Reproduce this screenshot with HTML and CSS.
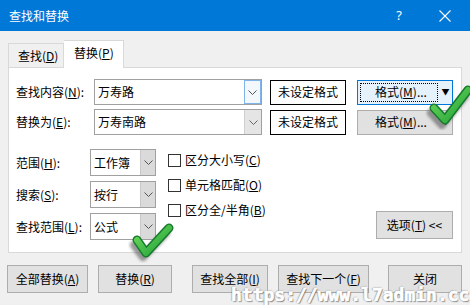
FILE: index.html
```html
<!DOCTYPE html>
<html lang="zh">
<head>
<meta charset="utf-8">
<link rel="stylesheet" href="styles.css">
</head>
<body>
<div class="titlebar">
  <span class="title">查找和替换</span>
  <span class="help">?</span>
  <svg class="close" width="12" height="12" viewBox="0 0 12 12"><path d="M0.5 0.5 L11.5 11.5 M11.5 0.5 L0.5 11.5" stroke="#fff" stroke-width="1.1" fill="none"/></svg>
</div>
<div class="tabs">
  <div class="tab">查找(<u>D</u>)</div>
  <div class="tab active">替换(<u>P</u>)</div>
</div>
<div class="panel">
  <div class="row">
    <span class="lbl">查找内容(<u>N</u>):</span>
    <div class="combo"><span class="val">万寿路</span><span class="arrow hot"><svg width="9" height="5" viewBox="0 0 9 5"><path d="M0.5 0.5 L4.5 4.5 L8.5 0.5" stroke="#555" fill="none"/></svg></span></div>
    <div class="fmtbox">未设定格式</div>
    <div class="fmtbtn focus"><span class="main"><span class="dots">格式(<u>M</u>)...</span></span><span class="drop">▼</span></div>
  </div>
  <div class="row r2">
    <span class="lbl">替换为(<u>E</u>):</span>
    <div class="combo"><span class="val">万寿南路</span><span class="arrow"><svg width="9" height="5" viewBox="0 0 9 5"><path d="M0.5 0.5 L4.5 4.5 L8.5 0.5" stroke="#666" fill="none"/></svg></span></div>
    <div class="fmtbox">未设定格式</div>
    <div class="fmtbtn"><span class="main"><span class="dots nofocus">格式(<u>M</u>)...</span></span><span class="drop">▼</span></div>
  </div>
  <div class="opts">
    <div class="selcol">
      <div class="srow"><span class="slbl">范围(<u>H</u>):</span><div class="sel"><span class="val">工作簿</span><span class="sarrow"><svg width="9" height="5" viewBox="0 0 9 5"><path d="M0.5 0.5 L4.5 4.5 L8.5 0.5" stroke="#555" fill="none"/></svg></span></div></div>
      <div class="srow"><span class="slbl">搜索(<u>S</u>):</span><div class="sel"><span class="val">按行</span><span class="sarrow"><svg width="9" height="5" viewBox="0 0 9 5"><path d="M0.5 0.5 L4.5 4.5 L8.5 0.5" stroke="#555" fill="none"/></svg></span></div></div>
      <div class="srow"><span class="slbl">查找范围(<u>L</u>):</span><div class="sel"><span class="val">公式</span><span class="sarrow"><svg width="9" height="5" viewBox="0 0 9 5"><path d="M0.5 0.5 L4.5 4.5 L8.5 0.5" stroke="#555" fill="none"/></svg></span></div></div>
    </div>
    <div class="checks">
      <label class="chk"><span class="box"></span>区分大小写(<u>C</u>)</label>
      <label class="chk"><span class="box"></span>单元格匹配(<u>O</u>)</label>
      <label class="chk"><span class="box"></span>区分全/半角(<u>B</u>)</label>
    </div>
    <div class="optbtn">选项(<u>T</u>) &lt;&lt;</div>
  </div>
</div>
<div class="buttons">
  <div class="btn b1">全部替换(<u>A</u>)</div>
  <div class="btn b2">替换(<u>R</u>)</div>
  <div class="btn b3">查找全部(<u>I</u>)</div>
  <div class="btn b4">查找下一个(<u>F</u>)</div>
  <div class="btn b5">关闭</div>
</div>

<svg class="check check1" width="50" height="48" viewBox="0 0 50 48">
  <defs><filter id="blur1" x="-30%" y="-30%" width="160%" height="160%"><feGaussianBlur stdDeviation="1.6"/></filter>
  <linearGradient id="g1" x1="0" y1="0" x2="1" y2="1"><stop offset="0" stop-color="#6fdc5a"/><stop offset="1" stop-color="#1f9e3a"/></linearGradient></defs>
  <polyline points="6,31 17,43 40,14" stroke="#555" stroke-opacity="0.6" stroke-width="8" fill="none" stroke-linecap="round" stroke-linejoin="round" filter="url(#blur1)"/>
  <polyline points="9,26 20,38 43,8" stroke="#157a2c" stroke-width="9" fill="none" stroke-linecap="round" stroke-linejoin="round"/>
  <polyline points="9,26 20,38 43,8" stroke="url(#g1)" stroke-width="6" fill="none" stroke-linecap="round" stroke-linejoin="round"/>
</svg>
<svg class="check check2" width="50" height="42" viewBox="0 0 50 42">
  <polyline points="6,24 15,36 38,12" stroke="#555" stroke-opacity="0.6" stroke-width="8" fill="none" stroke-linecap="round" stroke-linejoin="round" filter="url(#blur1)"/>
  <polyline points="9,19 18,32 41,7" stroke="#157a2c" stroke-width="9" fill="none" stroke-linecap="round" stroke-linejoin="round"/>
  <polyline points="9,19 18,32 41,7" stroke="url(#g1)" stroke-width="6" fill="none" stroke-linecap="round" stroke-linejoin="round"/>
</svg>
<div class="watermark">https://www.l7admin.cc</div>
</body>
</html>
```

FILE: styles.css
```css
* { box-sizing: border-box; }
html, body { margin: 0; padding: 0; }
body {
  width: 470px;
  height: 305px;
  overflow: hidden;
  position: relative;
  background: #f0f0f0;
  font-family: "Microsoft YaHei", "Noto Sans CJK SC", sans-serif;
  font-size: 12px;
  line-height: 1;
  color: #000;
}
u { text-decoration: underline; text-underline-offset: 1px; }

.titlebar {
  height: 31px;
  background: #0078d7;
  color: #fff;
  display: flex;
  align-items: center;
  padding-left: 9px;
}
.title { flex: 1; font-size: 12px; }
.help { font-family: "Noto Sans", sans-serif; font-size: 13px; margin-right: 37px; }
.close { margin-right: 19px; }

.tabs {
  display: flex;
  align-items: flex-end;
  height: 28px;
  margin-top: 9px;
  padding-left: 8px;
  position: relative;
  z-index: 2;
}
.tab {
  height: 24px;
  margin-bottom: 1px;
  width: 56px;
  padding-left: 9px;
  display: flex;
  align-items: center;
  border: 1px solid #d9d9d9;
  border-bottom: none;
  background: #f0f0f0;
}
.tab.active {
  height: 28px;
  margin-bottom: 0;
  width: 60px;
  padding-left: 10px;
  padding-bottom: 3px;
  border-left: none;
  background: #fff;
}

.panel {
  position: relative;
  z-index: 1;
  margin: -1px 8px 0 8px;
  height: 186px;
  border: 1px solid #d9d9d9;
  background: #fff;
  padding: 11px 8px 0 7px;
}
.row { display: flex; align-items: center; height: 26px; }
.row.r2 { margin-top: 4px; }
.lbl { width: 78px; }
.combo {
  width: 168px;
  height: 26px;
  border: 1px solid #a0a0a0;
  display: flex;
  align-items: center;
  background: #fff;
}
.combo .val { flex: 1; padding-left: 3px; }
.arrow {
  width: 17px;
  height: 100%;
  display: flex;
  align-items: center;
  justify-content: center;
  background: #e5e5e5;
  border-left: 1px solid #cfcfcf;
}
.arrow.hot { background: #f3f8fd; border: 1px solid #7eb4ea; }
.fmtbox {
  margin-left: 8px;
  width: 76px;
  height: 25px;
  border: 1px solid #000;
  display: flex;
  align-items: center;
  justify-content: center;
}
.fmtbtn {
  margin-left: 11px;
  width: 96px;
  height: 25px;
  border: 1px solid #adadad;
  background: #e1e1e1;
  display: flex;
  align-items: stretch;
}
.fmtbtn.focus { border-color: #0078d7; background: #e5f1fb; border-width: 1px; }
.fmtbtn .main { flex: 1; display: flex; padding: 2px 1px 2px 2px; }
.dots {
  flex: 1;
  display: flex;
  align-items: center;
  justify-content: center;
  border: 1px dotted #000;
  padding-left: 4px;
}
.dots.nofocus { border-color: transparent; }
.drop { width: 13px; display: flex; align-items: center; justify-content: center; font-size: 8px; }

.opts { display: flex; margin-top: 14px; }
.selcol { display: flex; flex-direction: column; gap: 5px; }
.srow { display: flex; align-items: center; height: 27px; }
.slbl { width: 74px; }
.sel {
  width: 66px;
  height: 27px;
  border: 1px solid #a0a0a0;
  display: flex;
  align-items: center;
}
.sel .val { flex: 1; padding-left: 3px; }
.sarrow {
  width: 15px;
  height: 100%;
  display: flex;
  align-items: center;
  justify-content: center;
  background: #dadada;
  border-left: 1px solid #c8c8c8;
}
.checks { display: flex; flex-direction: column; gap: 3px; margin-left: 12px; }
.chk { display: flex; align-items: center; height: 22px; }
.box {
  width: 13px;
  height: 13px;
  border: 1px solid #333;
  background: #fff;
  margin-right: 4px;
}
.optbtn {
  margin-left: auto;
  align-self: flex-end;
  margin-bottom: 1px;
  width: 77px;
  height: 28px;
  border: 1px solid #adadad;
  background: #e1e1e1;
  display: flex;
  align-items: center;
  justify-content: center;
}

.buttons { display: flex; margin-top: 12px; padding-left: 7px; }
.btn {
  height: 28px;
  border: 1px solid #adadad;
  background: #e1e1e1;
  display: flex;
  align-items: center;
  justify-content: center;
}
.b1 { width: 81px; }
.b2 { width: 74px; margin-left: 10px; }
.b3 { width: 76px; margin-left: 20px; }
.b4 { width: 91px; margin-left: 10px; }
.b5 { width: 74px; margin-left: 19px; }

.check { position: absolute; z-index: 5; }
.check1 { left: 425px; top: 82px; }
.check2 { left: 128px; top: 221px; }

.watermark {
  position: absolute;
  z-index: 6;
  left: 231px;
  top: 286px;
  font-family: "DejaVu Sans Mono", monospace;
  font-weight: bold;
  font-size: 18px;
  color: #fff;
  -webkit-text-stroke: 0.7px #fff;
  text-shadow: 1px 1px 1px rgba(80,80,80,0.8), -1px 0 1px rgba(110,110,110,0.6), 0 -1px 1px rgba(130,130,130,0.4);
  white-space: nowrap;
}
```
